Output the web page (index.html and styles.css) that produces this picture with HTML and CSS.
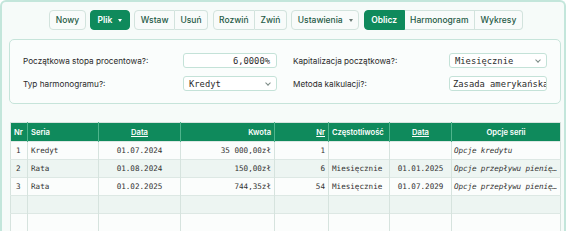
FILE: index.html
```html
<!DOCTYPE html>
<html lang="pl">
<head>
<meta charset="utf-8">
<title>Harmonogram</title>
<link rel="stylesheet" href="styles.css">
</head>
<body>
<div class="app">
  <div class="toolbar">
    <button class="btn">Nowy</button>
    <button class="btn primary">Plik <span class="caret"></span></button>
    <div class="group">
      <button class="btn">Wstaw</button>
      <button class="btn">Usuń</button>
    </div>
    <div class="group">
      <button class="btn">Rozwiń</button>
      <button class="btn">Zwiń</button>
    </div>
    <button class="btn">Ustawienia <span class="caret dark"></span></button>
    <div class="group">
      <button class="btn primary">Oblicz</button>
      <button class="btn">Harmonogram</button>
      <button class="btn">Wykresy</button>
    </div>
  </div>

  <div class="panel">
    <div class="form">
      <label class="lbl">Początkowa stopa procentowa?:</label>
      <div class="field right">6,0000%</div>
      <label class="lbl gap">Kapitalizacja początkowa?:</label>
      <div class="field select">Miesięcznie<span class="chev"></span></div>
      <label class="lbl">Typ harmonogramu?:</label>
      <div class="field select">Kredyt<span class="chev"></span></div>
      <label class="lbl gap">Metoda kalkulacji?:</label>
      <div class="field clip">Zasada amerykańska</div>
    </div>
  </div>

  <table class="grid">
    <colgroup>
      <col class="c-nr"><col class="c-seria"><col class="c-data"><col class="c-kwota">
      <col class="c-nr2"><col class="c-freq"><col class="c-data2"><col class="c-opt">
    </colgroup>
    <thead>
      <tr>
        <th class="l">Nr</th>
        <th class="l">Seria</th>
        <th><u>Data</u></th>
        <th class="r">Kwota</th>
        <th class="r"><u>Nr</u></th>
        <th class="l">Częstotliwość</th>
        <th><u>Data</u></th>
        <th>Opcje serii</th>
      </tr>
    </thead>
    <tbody>
      <tr>
        <td>1</td><td>Kredyt</td><td class="c">01.07.2024</td><td class="r">35 000,00zł</td>
        <td class="r">1</td><td></td><td></td><td class="it">Opcje kredytu</td>
      </tr>
      <tr class="alt">
        <td>2</td><td>Rata</td><td class="c">01.08.2024</td><td class="r">150,00zł</td>
        <td class="r">6</td><td>Miesięcznie</td><td class="c">01.01.2025</td><td class="it">Opcje przepływu pienię…</td>
      </tr>
      <tr>
        <td>3</td><td>Rata</td><td class="c">01.02.2025</td><td class="r">744,35zł</td>
        <td class="r">54</td><td>Miesięcznie</td><td class="c">01.07.2029</td><td class="it">Opcje przepływu pienię…</td>
      </tr>
      <tr class="alt">
        <td></td><td></td><td></td><td></td><td></td><td></td><td></td><td></td>
      </tr>
      <tr>
        <td></td><td></td><td></td><td></td><td></td><td></td><td></td><td></td>
      </tr>
      <tr class="alt">
        <td></td><td></td><td></td><td></td><td></td><td></td><td></td><td></td>
      </tr>
    </tbody>
  </table>
</div>
</body>
</html>
```

FILE: styles.css
```css
* { box-sizing: border-box; }
html, body { margin: 0; padding: 0; background: #ffffff; }
body { font-family: Inter, "Noto Sans", sans-serif; color: #2b2b2b; }

.app {
  width: 566px;
  height: 260px;
  border: 2px solid #c3e6db;
  border-bottom: none;
  border-radius: 6px 6px 0 0;
  background: #f6fbf9;
  padding: 8px 3px 0 7px;
}

.toolbar {
  display: flex;
  justify-content: center;
  gap: 4.5px;
  height: 20px;
  padding-left: 2px;
}
.group { display: flex; }
.group .btn { border-radius: 0; }
.group .btn + .btn { border-left: none; }
.group .btn:first-child { border-radius: 4px 0 0 4px; }
.group .btn:last-child { border-radius: 0 4px 4px 0; }

.btn {
  height: 20px;
  padding: 0 5.5px;
  font-family: Inter, sans-serif;
  font-size: 8.5px;
  font-weight: 500;
  color: #1f5a46;
  background: #f8fbfa;
  border: 1px solid #d2e3dd;
  border-radius: 4px;
  display: flex;
  align-items: center;
  gap: 6px;
}
.btn.primary {
  background: #0f8a5c;
  border-color: #0f8a5c;
  color: #ffffff;
  font-weight: 600;
  padding: 0 6.5px;
}
.caret {
  width: 0; height: 0;
  border-left: 2.5px solid transparent;
  border-right: 2.5px solid transparent;
  border-top: 3px solid #ffffff;
}
.caret.dark { border-top-color: #6b7a75; }

.panel {
  margin-top: 9px;
  width: 552px;
  border: 1px solid #c6e4da;
  border-radius: 5px;
  background: #fafdfc;
  padding: 13px 13px 12px 13px;
}
.form {
  display: grid;
  grid-template-columns: 160px 94px 172px 98px;
  row-gap: 8px;
  align-items: center;
}
.lbl { font-size: 8.2px; color: #2b2b2b; }
.lbl.gap { margin-left: 16px; }
.field {
  height: 15px;
  border: 1px solid #c4e2d8;
  border-radius: 3px;
  background: #ffffff;
  font-family: "DejaVu Sans Mono", monospace;
  font-size: 8.8px;
  color: #2b2b2b;
  padding: 0 5px;
  display: flex;
  align-items: center;
  white-space: nowrap;
  overflow: hidden;
}
.field.right { justify-content: flex-end; padding-right: 6px; }
.field.select { justify-content: space-between; padding-right: 6px; }
.field.clip { padding-left: 3px; }
.chev {
  width: 4px; height: 4px;
  border-right: 1px solid #7b8a85;
  border-bottom: 1px solid #7b8a85;
  transform: translateY(-1px) rotate(45deg);
}

.grid {
  margin-top: 18px;
  margin-left: 1px;
  width: 550px;
  border-collapse: collapse;
  table-layout: fixed;
  border: 1px solid #d6e3de;
}
.c-nr { width: 17px; }
.c-seria { width: 71px; }
.c-data { width: 82px; }
.c-kwota { width: 94px; }
.c-nr2 { width: 54px; }
.c-freq { width: 61px; }
.c-data2 { width: 62px; }
.c-opt { width: 109px; }

.grid th {
  height: 19px;
  background: #0f8a5c;
  color: #ffffff;
  font-size: 7.6px;
  font-weight: 600;
  padding: 0 3px;
  border-left: 1px solid #4fb48c;
  text-align: center;
  white-space: nowrap;
  overflow: hidden;
}
.grid th:first-child { border-left: none; }
.grid th.l { text-align: left; }
.grid th.r { text-align: right; }
.grid th u { text-decoration-thickness: 1px; text-underline-offset: 1px; }

.grid td {
  height: 18px;
  font-family: "DejaVu Sans Mono", monospace;
  font-size: 7.6px;
  color: #333333;
  padding: 0 3px;
  border-left: 1px solid #d6e3de;
  border-top: 1px solid #dde8e4;
  white-space: nowrap;
  overflow: hidden;
  background: #fbfdfc;
}
.grid td.it { padding-left: 2px; letter-spacing: -0.1px; }
.grid td:first-child { padding-left: 5px; border-left: none; }
.grid tr.alt td { background: #edf5f2; }
.grid td.c { text-align: center; }
.grid td.r { text-align: right; }
.grid td.it { font-style: italic; }
```
